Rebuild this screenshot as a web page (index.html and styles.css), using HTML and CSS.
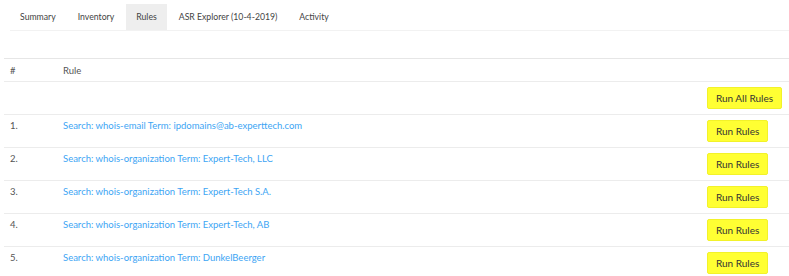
FILE: index.html
```html
<!DOCTYPE html>
<html lang="en">
<head>
  <meta charset="UTF-8" />
  <title>Rules</title>
  <link rel="stylesheet" href="styles.css">
</head>
<body>
  <ul class="tabs">
    <li><a href="#">Summary</a></li>
    <li><a href="#">Inventory</a></li>
    <li class="active"><a href="#">Rules</a></li>
    <li><a href="#">ASR Explorer (10-4-2019)</a></li>
    <li><a href="#">Activity</a></li>
  </ul>

  <table class="rules">
    <thead>
      <tr>
        <th class="num">#</th>
        <th>Rule</th>
        <th class="action"></th>
      </tr>
    </thead>
    <tbody>
      <tr>
        <td></td>
        <td></td>
        <td class="action"><button class="btn">Run All Rules</button></td>
      </tr>
      <tr>
        <td>1.</td>
        <td><a href="#">Search: whois-email Term: ipdomains@ab-experttech.com</a></td>
        <td class="action"><button class="btn">Run Rules</button></td>
      </tr>
      <tr>
        <td>2.</td>
        <td><a href="#">Search: whois-organization Term: Expert-Tech, LLC</a></td>
        <td class="action"><button class="btn">Run Rules</button></td>
      </tr>
      <tr>
        <td>3.</td>
        <td><a href="#">Search: whois-organization Term: Expert-Tech S.A.</a></td>
        <td class="action"><button class="btn">Run Rules</button></td>
      </tr>
      <tr>
        <td>4.</td>
        <td><a href="#">Search: whois-organization Term: Expert-Tech, AB</a></td>
        <td class="action"><button class="btn">Run Rules</button></td>
      </tr>
      <tr>
        <td>5.</td>
        <td><a href="#">Search: whois-organization Term: DunkelBeerger</a></td>
        <td class="action"><button class="btn">Run Rules</button></td>
      </tr>
    </tbody>
  </table>
</body>
</html>
```

FILE: styles.css
```css
* {
  box-sizing: border-box;
  margin: 0;
  padding: 0;
  font-family: 'Lato', 'Open Sans', sans-serif;
}

body {
  background: #fff;
  color: #555;
  font-size: 9.5px;
  padding-left: 4px;
  overflow: hidden;
}

.tabs {
  list-style: none;
  display: flex;
  margin: 4px 0 0 6px;
  border-bottom: 1px solid #f2f2f2;
}
.tabs li {
  margin-right: 2px;
}
.tabs a {
  display: block;
  height: 26px;
  line-height: 26px;
  padding: 0 10px;
  color: #444;
  text-decoration: none;
  font-size: 8.7px;
}
.tabs .active a {
  background: #eeeeee;
}

.rules {
  width: 100%;
  margin-top: 27px;
  border-collapse: collapse;
  border-top: 1px solid #e6e6e6;
}
.rules th {
  text-align: left;
  font-weight: normal;
  height: 23px;
  padding: 0 6px;
  border-bottom: 1px solid #ececec;
}
.rules th.num {
  width: 53px;
}
.rules td {
  vertical-align: top;
  padding: 5px 6px 0;
  border-bottom: 1px solid #ececec;
}
.rules td.action,
.rules th.action {
  width: 76px;
}
.rules td.action {
  padding: 5px 7px 5px 6px;
}
.rules a {
  color: #3da5f4;
  text-decoration: none;
}

.btn {
  display: block;
  height: 22px;
  padding: 0 8px;
  background: #ffff33;
  border: 1px solid #f2f22a;
  border-radius: 2px;
  color: #333;
  font-size: 10px;
  white-space: nowrap;
  cursor: pointer;
}
```
